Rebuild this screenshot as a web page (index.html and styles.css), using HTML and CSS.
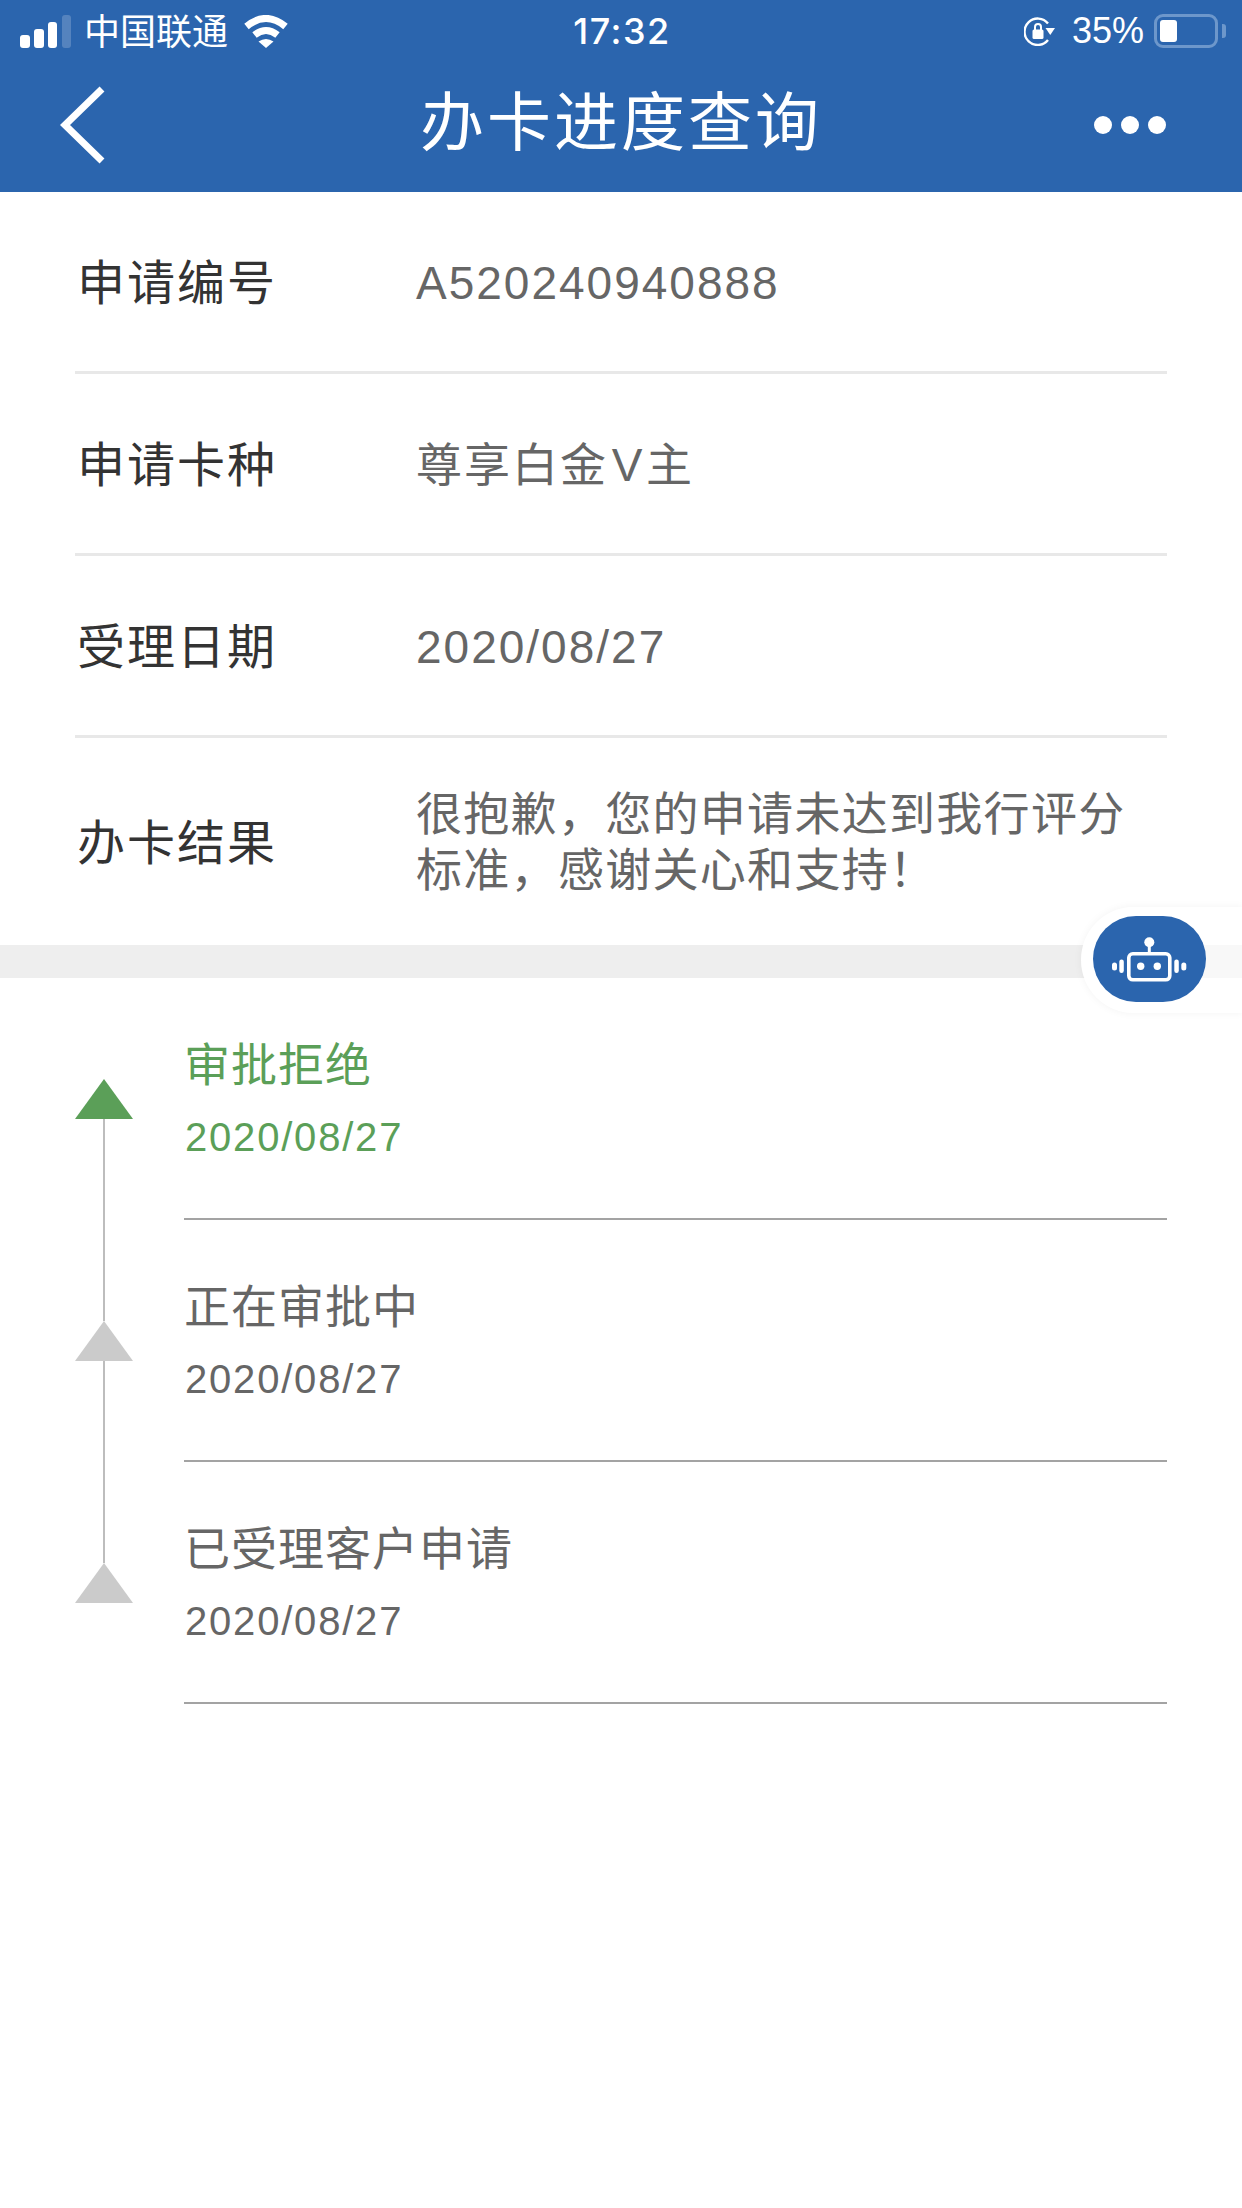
FILE: index.html
```html
<!DOCTYPE html>
<html lang="zh">
<head>
<meta charset="utf-8">
<title>办卡进度查询</title>
<link rel="stylesheet" href="styles.css">
</head>
<body>
<header class="header">
  <div class="status">
    <div class="status-left">
      <svg class="signal" width="51" height="33" viewBox="0 0 51 33"><rect x="0" y="20" width="10" height="13" rx="3" fill="#fff"/><rect x="14" y="14" width="10" height="19" rx="3" fill="#fff"/><rect x="28" y="7" width="9" height="26" rx="3" fill="#fff"/><rect x="42" y="0" width="9" height="33" rx="3" fill="#fff" opacity=".2"/></svg>
      <span class="carrier">中国联通</span>
      <svg class="wifi" width="46" height="33" viewBox="0 0 46 33" fill="none"><path d="M3.500 11.500Q23-4.500 42.500 11.500" stroke="#fff" stroke-width="7"/><path d="M11.500 20Q23 11 34.500 20" stroke="#fff" stroke-width="7"/><path d="M15.500 26.500Q23 21.500 30.500 26.500L23 33z" fill="#fff"/></svg>
    </div>
    <div class="status-time">17:32</div>
    <div class="status-right">
      <svg class="lock" width="31" height="29" viewBox="0 0 31 29"><path d="M24 6.500A13.200 13.200 0 1 0 24 23" fill="none" stroke="#fff" stroke-width="2.400"/><path d="M21.500 11H31l-4.750 7z" fill="#fff"/><rect x="8.500" y="12.500" width="11" height="9.500" rx="1.500" fill="#fff"/><path d="M11 13V10a3 3 0 0 1 6 0v3" fill="none" stroke="#fff" stroke-width="2"/></svg>
      <span class="battery-pct">35%</span>
      <div class="battery"><div class="battery-fill"></div></div>
      <div class="battery-cap"></div>
    </div>
  </div>
  <div class="nav">
    <svg class="back" width="45" height="78" viewBox="0 0 45 78"><path d="M42 3 5 39l37 36" fill="none" stroke="#fff" stroke-width="7"/></svg>
    <h1 class="title">办卡进度查询</h1>
    <div class="more"><i></i><i></i><i></i></div>
  </div>
</header>

<main>
  <section class="info">
    <div class="row"><div class="label">申请编号</div><div class="value">A520240940888</div></div>
    <div class="row"><div class="label">申请卡种</div><div class="value">尊享白金<span class="roman">V</span>主</div></div>
    <div class="row"><div class="label">受理日期</div><div class="value">2020/08/27</div></div>
    <div class="row row-last"><div class="label">办卡结果</div><div class="value value-multi">很抱歉，您的申请未达到我行评分标准，感谢关心和支持！</div></div>
  </section>
  <div class="band"></div>
  <section class="timeline">
    <div class="step step-active">
      <div class="marker"><span class="tri"></span><span class="line"></span></div>
      <div class="step-body"><div class="step-title">审批拒绝</div><div class="step-date">2020/08/27</div></div>
    </div>
    <div class="step">
      <div class="marker"><span class="tri"></span><span class="line"></span></div>
      <div class="step-body"><div class="step-title">正在审批中</div><div class="step-date">2020/08/27</div></div>
    </div>
    <div class="step">
      <div class="marker"><span class="tri"></span></div>
      <div class="step-body"><div class="step-title">已受理客户申请</div><div class="step-date">2020/08/27</div></div>
    </div>
  </section>
</main>

<div class="bot">
  <div class="bot-btn">
    <svg width="75" height="45" viewBox="0 0 75 45" fill="none"><circle cx="37.300" cy="5.300" r="5" fill="#fff"/><path d="M37.300 9v7" stroke="#fff" stroke-width="3"/><rect x="16.800" y="16.800" width="41" height="26" rx="4" stroke="#fff" stroke-width="3.600"/><circle cx="28.700" cy="29.300" r="3.700" fill="#fff"/><circle cx="45.300" cy="29.300" r="3.700" fill="#fff"/><rect x="7.300" y="22.500" width="4.500" height="13.500" rx="2.200" fill="#fff"/><rect x="62.300" y="22.500" width="4.500" height="13.500" rx="2.200" fill="#fff"/><rect x="0" y="25.500" width="5" height="8" rx="2.500" fill="#fff"/><rect x="69.300" y="25.500" width="5" height="8" rx="2.500" fill="#fff"/></svg>
  </div>
</div>
</body>
</html>
```
FILE: styles.css
```css
* { box-sizing: border-box; }
html, body { margin: 0; padding: 0; }
body {
  position: relative;
  width: 1242px;
  height: 2208px;
  overflow: hidden;
  background: #fff;
  font-family: "Noto Sans CJK SC", "Noto Sans", sans-serif;
  color: #333;
}
.header { height: 192px; background: #2b65ae; color: #fff; }
.status {
  height: 62px;
  padding: 0 16px 0 20px;
  display: flex;
  align-items: center;
  justify-content: space-between;
  position: relative;
}
.status-left, .status-right { display: flex; align-items: center; }
.signal { display: block; }
.carrier { font-size: 36px; line-height: 44px; margin-left: 13px; padding-bottom: 5px; }
.wifi { margin-left: 15px; }
.status-time {
  position: absolute;
  left: 0; right: 0; top: 9px;
  text-align: center;
  font: 500 36px/44px "Inter", sans-serif;
  letter-spacing: 1.500px;
  padding-left: 2px;
}
.lock { margin-right: 17px; }
.battery-pct { font: 400 36px/44px "Liberation Sans", sans-serif; margin-right: 10px; }
.battery {
  width: 64px; height: 34px;
  border: 3px solid #6d97cb;
  border-radius: 9px;
  padding: 3px;
}
.battery-fill { width: 17px; height: 22px; background: #fff; border-radius: 3px; }
.battery-cap { width: 4px; height: 14px; background: #6d97cb; margin-left: 4px; border-radius: 0 3px 3px 0; }
.nav {
  height: 130px;
  padding: 0 76px 4px 60px;
  display: flex;
  align-items: center;
  justify-content: space-between;
  position: relative;
}
.title {
  position: absolute;
  left: 0; right: 0; top: 12px;
  margin: 0;
  text-align: center;
  font-size: 64px;
  line-height: 86px;
  font-weight: 400;
  letter-spacing: 3px;
}
.more { display: flex; gap: 9px; }
.more i { width: 18px; height: 18px; border-radius: 50%; background: #fff; display: block; }
.info { padding: 0 75px; }
.row {
  height: 182px;
  display: flex;
  align-items: center;
  border-bottom: 3px solid #e8e8e8;
}
.row-last { height: 207px; border-bottom: 0; }
.label { width: 341px; padding: 0 0 5px 2px; font-size: 48px; letter-spacing: 2px; line-height: 60px; color: #333; flex: none; }
.value { font-size: 46px; line-height: 56px; letter-spacing: 2px; color: #666; padding-top: 2px; font-family: "Liberation Sans", "Noto Sans CJK SC", sans-serif; }
.roman { display: inline-block; width: 38px; text-align: center; letter-spacing: 0; font-size: 46px; }
.value-multi { line-height: 56px; letter-spacing: 1.300px; padding-top: 0; }
.band { height: 33px; background: #eeeeee; }
.timeline { padding: 0 75px; }
.step { height: 242px; display: flex; }
.marker { width: 109px; flex: none; position: relative; }
.tri {
  position: absolute;
  left: 0; top: 101px;
  width: 0; height: 0;
  border-left: 29px solid transparent;
  border-right: 29px solid transparent;
  border-bottom: 40px solid #cbcbcb;
}
.step-active .tri { border-bottom-color: #5b9f58; }
.line { position: absolute; left: 28px; top: 141px; width: 2px; height: 202px; background: #bdbdbd; }
.step-body { flex: 1; border-bottom: 2px solid #a3a3a3; color: #666; }
.step-active .step-body { color: #5b9f58; }
.step-title { font-size: 46px; line-height: 60px; letter-spacing: 1px; margin-top: 53px; }
.step-date { font-family: "Liberation Sans", sans-serif; font-size: 40px; line-height: 50px; margin-top: 21px; padding-left: 1px; letter-spacing: 1.800px; }
.bot {
  position: absolute;
  left: 1081px; top: 907px;
  width: 161px; height: 106px;
  background: linear-gradient(90deg, #fff 30%, rgba(255,255,255,.6) 60%);
  border-radius: 53px 0 0 53px;
  box-shadow: 0 0 8px rgba(0,0,0,.05);
  padding: 9px 0 0 12px;
}
.bot-btn {
  width: 113px; height: 86px;
  background: #2b65ae;
  border-radius: 43px;
  display: flex;
  align-items: center;
  justify-content: center;
}
```
